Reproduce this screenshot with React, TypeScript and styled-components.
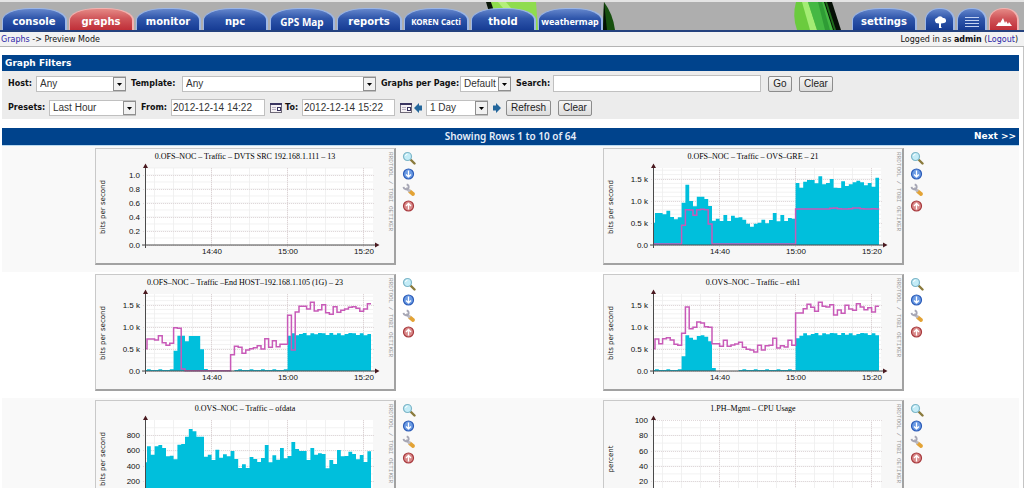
import React from 'react';
import styled, { createGlobalStyle } from 'styled-components';

const GlobalStyle = createGlobalStyle`
  * { box-sizing: border-box; }
  html, body { margin: 0; background: #fff; }
  html { scrollbar-width: none; }
  body { font-family: "DejaVu Sans", Verdana, sans-serif; font-size: 8px; color: #111; }
  a { text-decoration: none; color: #2a1fa8; }
`;

const Header = styled.header`
  position: relative;
  display: flex;
  justify-content: space-between;
  align-items: flex-end;
  height: 32px;
  padding: 0 5px 0 2px;
  background: #aeaeae;
  border-top: 2px solid #e4e4e4;
  border-bottom: 2px solid #24427e;
`;

const Blades = styled.svg`
  position: absolute;
  left: 480px;
  top: 0;
`;

const TabGroup = styled.nav`
  position: relative;
  display: flex;
  gap: 2px;
`;

const Tab = styled.a<{ $red?: boolean; $font?: string; $size?: number; $gap?: number }>`
  display: flex;
  align-items: center;
  justify-content: center;
  width: 65px;
  height: 22px;
  margin-right: ${p => p.$gap ?? 0}px;
  padding-top: 4px;
  color: #fff;
  white-space: nowrap;
  font: bold ${p => p.$size ?? 10}px/12px ${p => p.$font ?? '"DejaVu Sans"'}, sans-serif;
  border: 1px solid ${p => (p.$red ? '#f3b3b0' : '#9db7e6')};
  border-right-width: 2px;
  border-bottom: 0;
  border-radius: 28px 28px 0 0 / 12px 12px 0 0;
  background: ${p => (p.$red
    ? 'linear-gradient(#e58985, #d0565a 45%, #c02f38)'
    : 'linear-gradient(#6486cc, #2f56ab 45%, #163c94)')};
`;

const IconTab = styled(Tab)`
  width: 30px;
  border-radius: 14px 14px 0 0 / 12px 12px 0 0;
`;

const Crumbs = styled.div`
  display: flex;
  justify-content: space-between;
  height: 15px;
  padding: 0 6px 0 1px;
  line-height: 15px;
  background: #f2f2f2;
  border-bottom: 1px solid #b4b4b4;
`;

const Main = styled.main`
  padding: 8px 4px 0 2px;
  border-right: 1px solid #c4c4c4;
`;

const TitleBar = styled.h1`
  margin: 0;
  height: 16px;
  padding-left: 3px;
  font-size: 9px;
  line-height: 16px;
  color: #fff;
  background: #00438c;
`;

const Filters = styled.form`
  display: flex;
  flex-direction: column;
  gap: 7px;
  padding: 4px 6px 3px;
  margin-bottom: 9px;
  background: #ececec;
`;

const FilterRow = styled.div`
  display: flex;
  align-items: center;
  height: 17px;
`;

const Label = styled.label<{ $w: number }>`
  flex: none;
  width: ${p => p.$w}px;
  font-weight: bold;
  font-size: 8px;
  white-space: nowrap;
`;

const SelectBox = styled.span<{ $w: number }>`
  position: relative;
  flex: none;
  width: ${p => p.$w}px;
  height: 16px;
  margin-right: 5px;
  select {
    appearance: none;
    display: block;
    width: 100%;
    height: 100%;
    padding: 0 3px;
    border: 1px solid #c0c0c0;
    border-radius: 0;
    background: #fff;
    color: #333;
    font: 10px/14px "Liberation Sans", Arial, sans-serif;
  }
  svg { position: absolute; right: 0; top: 1px; pointer-events: none; }
`;

const TextInput = styled.input<{ $w: number; $gap?: number }>`
  flex: none;
  width: ${p => p.$w}px;
  height: 17px;
  margin-right: ${p => p.$gap ?? 5}px;
  padding: 0 1px;
  border: 1px solid #c0c0c0;
  background: #fff;
  color: #333;
  font: 10px/14px "Liberation Sans", Arial, sans-serif;
`;

const Button = styled.button<{ $w: number }>`
  flex: none;
  width: ${p => p.$w}px;
  height: 16px;
  margin-right: 7px;
  padding: 0;
  border: 1px solid #8c8c8c;
  border-radius: 2px;
  background: linear-gradient(#f6f6f6, #dcdcdc);
  color: #222;
  font: 10px/13px "Liberation Sans", Arial, sans-serif;
`;

const IconButton = styled.button<{ $gap?: number }>`
  display: flex;
  flex: none;
  margin: 0 ${p => p.$gap ?? 0}px 0 0;
  padding: 0;
  border: 0;
  background: none;
`;

const Pager = styled.div`
  display: grid;
  grid-template-columns: 1fr auto 1fr;
  height: 17px;
  padding: 0 3px;
  font-size: 9px;
  line-height: 17px;
  color: #fff;
  background: #00438c;
  a { color: #fff; font-weight: bold; text-align: right; }
`;

const RowCount = styled.span`
  font: 600 10px/17px "Noto Sans", sans-serif;
  color: #e6eefa;
`;

const GraphRow = styled.section<{ $alt?: boolean }>`
  display: grid;
  grid-template-columns: 1fr 1fr;
  height: 126px;
  padding-top: 2px;
  background: ${p => (p.$alt ? '#fff' : '#f9f9f9')};
`;

const Results = styled.div`
  border-top: 1px solid #b9d9f0;
`;

const GraphCell = styled.div`
  display: flex;
  justify-content: center;
  gap: 6px;
`;

const Frame = styled.div`
  width: 301px;
  height: 117px;
  border: 1px solid #c9c9c9;
  border-right: 2px solid #a2a2a2;
  border-bottom: 2px solid #a2a2a2;
  background: #f7f7f7;
  svg { display: block; margin: -1px; }
`;

const Actions = styled.div`
  display: flex;
  flex-direction: column;
  gap: 2px;
  width: 16px;
  padding-top: 3px;
`;

const Select = ({ id, w, value }: { id: string; w: number; value: string }) => (
  <SelectBox $w={w}>
    <select id={id} aria-label={id} defaultValue={value}><option>{value}</option></select>
    <svg width="13" height="14">
      <rect x=".5" y=".5" width="12" height="13" fill="#f1f1f1" stroke="#8f8f8f" />
      <path d="M4 6h5l-2.500 3z" fill="#000" />
    </svg>
  </SelectBox>
);

const Calendar = () => (
  <svg width="12" height="11">
    <rect x=".5" y="1.500" width="11" height="9" fill="#f4f0f4" stroke="#6f6a78" />
    <path d="M0 1h12v2H0z" fill="#3a3560" />
    <path d="M2 5.500h4M2 7.500h4" stroke="#b8b0c0" />
    <rect x="7.500" y="5.500" width="3" height="3" fill="#fff" stroke="#3a3560" />
  </svg>
);

const Arrow = ({ right }: { right?: boolean }) => (
  <svg width="8" height="10">
    <path d={right ? 'M0 2.500h3V0l5 5-5 5V7.500H0z' : 'M8 2.500H5V0L0 5l5 5V7.500h3z'} fill="#24679c" />
  </svg>
);

const Zoom = () => (
  <svg width="14" height="14">
    <path d="M9 9l3.500 3.500" stroke="#8a7a3c" strokeWidth="2.400" strokeLinecap="round" />
    <circle cx="5.500" cy="5.500" r="4" fill="#c3ecf7" stroke="#7db6c8" strokeWidth="1.200" />
    <path d="M3.500 5a2.200 2.200 0 0 1 2-1.800" stroke="#fff" fill="none" />
  </svg>
);

const Disc = ({ tone, fill, path }: { tone: string; fill: string; path: string }) => (
  <svg width="14" height="14">
    <circle cx="6.500" cy="7" r="5" fill={fill} stroke={tone} strokeWidth="1.200" />
    <path d={path} stroke="#fff" strokeWidth="1.300" fill="none" />
  </svg>
);

const Wrench = () => (
  <svg width="14" height="14">
    <path d="M8 8.500l3 2.500" stroke="#e3a335" strokeWidth="3.800" strokeLinecap="round" />
    <path d="M4 5l4 3.500" stroke="#b9b9c4" strokeWidth="2.800" />
    <path d="M1.500 3.800a2.800 2.800 0 0 0 4.800 1.600A2.800 2.800 0 0 0 4.700 1.300" stroke="#a6a6b4" strokeWidth="1.900" fill="none" />
  </svg>
);

const GraphActions = () => (
  <Actions>
    <IconButton aria-label="Zoom graph"><Zoom /></IconButton>
    <IconButton aria-label="Export data"><Disc tone="#2c5cb8" fill="#6b9be4" path="M6.500 3.500v6M4 7.500l2.500 2.300L9 7.500" /></IconButton>
    <IconButton aria-label="Graph source"><Wrench /></IconButton>
    <IconButton aria-label="Page top"><Disc tone="#a83a3e" fill="#d98a8a" path="M6.500 10.500v-6M4 7l2.500-2.500L9 7" /></IconButton>
  </Actions>
);

/* Series are y positions on a grid three times finer than the canvas, one per minute. */
type Plot = {
  title: string;
  unit: string;
  labels: [string, number][];
  minor: number;
  base?: number;
  area?: number[];
  line?: number[];
};

const AXIS_X = 50;
const AXIS_Y = 97;

const steps = (ys: number[], base: number, close: boolean) => {
  const right = 276;
  let d = '';
  ys.forEach((y, i) => {
    const x0 = i === 0 ? AXIS_X : AXIS_X + 2 + (i - 1) * 3.8;
    const x1 = i === ys.length - 1 ? right : AXIS_X + 2 + i * 3.8;
    const py = (AXIS_Y - (base - y) / 3).toFixed(1);
    d += `${i ? 'L' : 'M'}${x0.toFixed(1)} ${py}L${x1.toFixed(1)} ${py}`;
  });
  return close ? `${d}L${right} ${AXIS_Y}L${AXIS_X} ${AXIS_Y}Z` : d;
};

const range = (from: number, to: number, by: number) => {
  const out: number[] = [];
  for (let v = from; by > 0 ? v <= to : v >= to; v += by) out.push(v);
  return out;
};

const Graph = ({ title, unit, labels, minor, base = 303, area, line }: Plot) => (
  <GraphCell>
    <Frame>
      <svg width="301" height="117" role="img" aria-label={title}>
        <rect x={AXIS_X} y="20" width="228" height="77" fill="#fff" />
        {range(AXIS_Y - minor, 20, -minor).map(y => (
          <path key={y} d={`M50 ${y}H278`} stroke="#ececec" strokeWidth=".7" />
        ))}
        {range(59, 278, 19).map(x => (
          <path key={x} d={`M${x + 0.5} 20V97`} stroke="#ededed" strokeWidth=".8" />
        ))}
        {[116, 192, 268].map(x => (
          <path key={x} d={`M${x + 0.5} 20V99`} stroke="#ddd2d4" strokeDasharray="1 1" />
        ))}
        {labels.map(([t, y]) => (
          <path key={t} d={`M48 ${y + 0.5}H279`} stroke="#e0d8da" strokeDasharray="1 1" />
        ))}
        {area && <path d={steps(area, base, true)} fill="#00bfdc" />}
        {line && <path d={steps(line, base, false)} fill="none" stroke="#c85ab8" strokeWidth="1.500" />}
        <path d="M47 97H281M50.500 100V18" stroke="#4a4a4a" fill="none" />
        <path d="M280 94.500l4.500 2.500-4.500 2.500zM48 20l2.500-4.500L53 20z" fill="#4a1a20" />
        <g fontFamily="Liberation Sans, Arial, sans-serif" fontSize="8" fill="#111">
          {labels.map(([t, y]) => <text key={t} x="45" y={y + 3} textAnchor="end">{t}</text>)}
          <text x="117" y="106" textAnchor="middle">14:40</text>
          <text x="193" y="106" textAnchor="middle">15:00</text>
          <text x="269" y="106" textAnchor="middle">15:20</text>
        </g>
        <text x="150" y="11" textAnchor="middle" fontFamily="Liberation Serif, serif" fontSize="8" fill="#000">{title}</text>
        <text transform="translate(10 59) rotate(-90)" textAnchor="middle" fontFamily="DejaVu Sans, sans-serif" fontSize="7" fill="#111">{unit}</text>
        <text transform="translate(294 4) rotate(90)" fontFamily="Liberation Mono, monospace" fontSize="6" fill="#9a9a9a">RRDTOOL / TOBI OETIKER</text>
      </svg>
    </Frame>
    <GraphActions />
  </GraphCell>
);

const fill = (n: number, v: number) => Array<number>(n).fill(v);
const kilo: [string, number][] = [['1.5 k', 31], ['1.0 k', 53], ['0.5 k', 75], ['0.0', 97]];
const idle = (n: number) => range(0, n - 1, 1).map(i => (i % 3 === 1 ? 298 : 300));
const busy = [197, 190, 196, 192, 189, 196, 190, 193, 189, 190, 195, 189, 194, 190, 196, 192, 189, 190, 195, 190, 196];

const plots: Plot[][] = [
  [
    {
      title: '0.OFS–NOC – Traffic – DVTS SRC 192.168.1.111 – 13', unit: 'bits per second', minor: 7,
      labels: [['1.0', 27], ['0.8', 41], ['0.6', 55], ['0.4', 69], ['0.2', 83], ['0.0', 97]],
    },
    {
      title: '0.OFS–NOC – Traffic – OVS–GRE – 21', unit: 'bits per second', minor: 4.4, labels: kilo, base: 299,
      area: [232, 203, 203, 207, 196, 215, 222, 216, 172, 118, 167, 183, 154, 154, 161, 182, 226, 220, 227, 209,
        227, 211, 217, 216, 223, 235, 244, 235, 232, 223, 234, 224, 203, 228, 209, 227, 218, 220, 113, 127,
        109, 104, 104, 114, 93, 117, 113, 101, 127, 128, 108, 122, 117, 111, 106, 111, 120, 113, 124, 97],
      line: [...fill(7, 296), 296, 240, 193, 194, 210, 193, 192, 193, 236, ...fill(22, 296), ...fill(9, 191), 189, 188, 190,
        191, 191, 190, 188, 188, 190, 191, 191, 190, 191, 191],
    },
  ],
  [
    {
      title: '0.OFS–NOC – Traffic –End HOST–192.168.1.105 (1G) – 23', unit: 'bits per second', minor: 4.4, labels: kilo,
      area: [...idle(8), 242, 197, 197, 214, 198, 198, 198, 238, 297, ...fill(7, 303), ...idle(14), ...busy, 192],
      line: [236, 207, 207, 210, 197, 218, 226, 220, 173, 175, 297, ...fill(12, 302), 254, 229, 232, 250, 240, 236, 233,
        227, 237, 206, 232, 212, 230, 223, 223, 136, 240, 126, 109, 109, 117, 97, 123, 119, 104, 128, 133, 110, 127,
        121, 117, 112, 110, 115, 124, 117, 101],
    },
    {
      title: '0.OVS–NOC – Traffic – eth1', unit: 'bits per second', minor: 4.4, labels: kilo,
      area: [...idle(8), 259, 196, 203, 209, 198, 196, 200, 214, 294, ...fill(6, 303), ...idle(15), 205, ...busy],
      line: [236, 207, 221, 206, 203, 210, 223, 226, 190, 111, 176, 172, 156, 159, 170, 172, 221, 221, 229, 211, 229,
        225, 222, 217, 232, 238, 240, 246, 226, 240, 227, 226, 205, 234, 227, 231, 211, 226, 129, 129, 116, 103, 112,
        124, 97, 109, 111, 104, 135, 120, 130, 106, 117, 121, 101, 111, 119, 113, 126, 109],
    },
  ],
  [
    {
      title: '0.OVS–NOC – Traffic – ofdata', unit: 'bits per second', minor: 7.7, base: 304,
      labels: [['800', 35], ['600', 50], ['400', 66], ['200', 81]],
      area: [200, 152, 177, 152, 148, 157, 182, 180, 191, 147, 145, 123, 100, 107, 123, 123, 183, 177, 193, 162, 186,
        176, 182, 166, 190, 217, 206, 217, 184, 190, 199, 187, 148, 200, 179, 192, 157, 188, 181, 139, 160, 166, 166,
        193, 157, 177, 173, 175, 218, 193, 205, 163, 182, 181, 168, 175, 191, 178, 199, 167],
    },
    {
      title: '1.PH–Mgmt – CPU Usage', unit: 'percent', minor: 7.7,
      labels: [['100', 20], ['80', 35], ['60', 51], ['40', 66], ['20', 81]],
    },
  ],
];

const noto = '"Noto Sans"';

export default function App() {
  return (
    <>
      <GlobalStyle />
      <Header>
        <Blades width="370" height="28">
          <path d="M6 0h5l7 10h-9z" fill="#0a1608" />
          <path d="M11 0h45l2 28H20z" fill="#8fdc4e" />
          <path d="M26 0l10 12h-8L18 0z" fill="#b4ee7c" />
          <path d="M124 0q9 12 11 28h-12z" fill="#17500f" />
          <path d="M124 0l3 28h-4z" fill="#041004" />
          <path d="M316 0h30l10 28h-39q-5-14-1-28z" fill="#6bcb3e" />
          <path d="M322 0h6l9 28h-7z" fill="#a3ec74" />
          <path d="M328 0h18l7 28h-16z" fill="#45b844" />
          <path d="M338 0h4l8 28h-5z" fill="#2f9c35" />
          <path d="M344 0h8l9 28h-8z" fill="#061006" />
          <path d="M345 0h2l9 28h-2z" fill="#1f6d1c" />
        </Blades>
        <TabGroup>
          <Tab href="#">console</Tab>
          <Tab href="#" $red>graphs</Tab>
          <Tab href="#">monitor</Tab>
          <Tab href="#">npc</Tab>
          <Tab href="#" $font={noto}>GPS Map</Tab>
          <Tab href="#">reports</Tab>
          <Tab href="#" $font={noto} $size={8}>KOREN Cacti</Tab>
          <Tab href="#">thold</Tab>
          <Tab href="#" $font={noto} $size={9}>weathermap</Tab>
        </TabGroup>
        <TabGroup>
          <Tab href="#" $gap={6}>settings</Tab>
          <IconTab href="#" aria-label="Tree view">
            <svg width="12" height="12">
              <path d="M1 5a2.500 2.500 0 0 1 2-3 3.500 3.500 0 0 1 6 0 2.500 2.500 0 0 1 1 5L7 7.500V11l1 1H5V7.500L2 7z" fill="#fff" />
            </svg>
          </IconTab>
          <IconTab href="#" aria-label="List view">
            <svg width="14" height="10"><path d="M0 .5h14M0 3.500h14M0 6.500h14M0 9.500h14" stroke="#c3d2f2" /></svg>
          </IconTab>
          <IconTab href="#" aria-label="Preview view" $red>
            <svg width="16" height="10"><path d="M0 9l3-4 1 1 3-5 2 5 1-2 2 3 1-2 3 4z" fill="#fff" /></svg>
          </IconTab>
        </TabGroup>
      </Header>
      <Crumbs>
        <span><a href="#">Graphs</a> -&gt; Preview Mode</span>
        <span>Logged in as <b>admin</b> (<a href="#">Logout</a>)</span>
      </Crumbs>
      <Main>
        <TitleBar>Graph Filters</TitleBar>
        <Filters onSubmit={e => e.preventDefault()}>
          <FilterRow>
            <Label $w={28} htmlFor="host">Host:</Label>
            <Select id="host" w={90} value="Any" />
            <Label $w={51} htmlFor="template">Template:</Label>
            <Select id="template" w={194} value="Any" />
            <Label $w={79} htmlFor="perpage">Graphs per Page:</Label>
            <Select id="perpage" w={51} value="Default" />
            <Label $w={37} htmlFor="search">Search:</Label>
            <TextInput id="search" $w={208} $gap={7} />
            <Button type="button" $w={24}>Go</Button>
            <Button type="button" $w={34}>Clear</Button>
          </FilterRow>
          <FilterRow>
            <Label $w={41} htmlFor="presets">Presets:</Label>
            <Select id="presets" w={87} value="Last Hour" />
            <Label $w={30} htmlFor="from">From:</Label>
            <TextInput id="from" $w={94} defaultValue="2012-12-14 14:22" />
            <IconButton type="button" aria-label="Pick start date" $gap={3}><Calendar /></IconButton>
            <Label $w={17} htmlFor="to">To:</Label>
            <TextInput id="to" $w={93} defaultValue="2012-12-14 15:22" />
            <IconButton type="button" aria-label="Pick end date" $gap={2}><Calendar /></IconButton>
            <IconButton type="button" aria-label="Shift back" $gap={4}><Arrow /></IconButton>
            <Select id="span" w={62} value="1 Day" />
            <IconButton type="button" aria-label="Shift forward" $gap={5}><Arrow right /></IconButton>
            <Button type="button" $w={45}>Refresh</Button>
            <Button type="button" $w={34}>Clear</Button>
          </FilterRow>
        </Filters>
        <Pager>
          <span />
          <RowCount>Showing Rows 1 to 10 of 64</RowCount>
          <a href="#">Next &gt;&gt;</a>
        </Pager>
        <Results>
          {plots.map((pair, i) => (
            <GraphRow key={i} $alt={i % 2 === 1}>
              {pair.map(p => <Graph key={p.title} {...p} />)}
            </GraphRow>
          ))}
        </Results>
      </Main>
    </>
  );
}
